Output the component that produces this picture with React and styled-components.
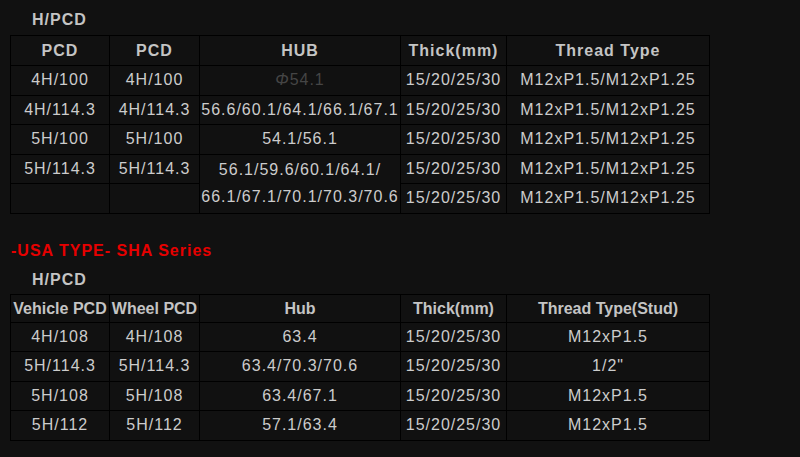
import React from 'react';
import styled, { createGlobalStyle } from 'styled-components';

const GlobalStyle = createGlobalStyle`
  body {
    margin: 0;
    background: #111111;
    font-family: "Liberation Sans", Arial, sans-serif;
  }
`;

const Page = styled.div`
  padding: 5px 0 0 10px;
  color: #cccccc;
  font-size: 16px;
  letter-spacing: 1px;
`;

const SubTitle = styled.div`
  font-weight: bold;
  color: #c4c4c4;
  line-height: ${p => p.$lh || 30}px;
  padding-left: 22px;
`;

const SeriesTitle = styled.div`
  font-weight: bold;
  color: #e60000;
  line-height: 28px;
  margin-top: 23px;
  padding-left: 1px;
`;

const Table = styled.table`
  border-collapse: collapse;
  table-layout: fixed;
  width: 699px;
  background: #111111;
`;

const Th = styled.th`
  border: 1px solid #000;
  padding: ${p => (p.$tight ? '0' : '1px 0')};
  line-height: 27px;
  font-weight: bold;
  color: #c4c4c4;
  text-align: center;
  white-space: nowrap;
  letter-spacing: ${p => (p.$tight ? '0' : '1px')};
`;

const Td = styled.td`
  border: 1px solid #000;
  padding: 1px 0;
  line-height: 26.5px;
  text-align: center;
  white-space: nowrap;
  vertical-align: middle;
  color: ${p => (p.$dim ? '#454545' : '#cccccc')};
`;

const Phi = styled.span`
  font-style: italic;
`;

const widths = [99, 90, 201, 106, 203];

const Cols = () => (
  <colgroup>
    {widths.map((w, i) => (
      <col key={i} style={{ width: w }} />
    ))}
  </colgroup>
);

const usaRows = [
  ['4H/108', '4H/108', '63.4', '15/20/25/30', 'M12xP1.5'],
  ['5H/114.3', '5H/114.3', '63.4/70.3/70.6', '15/20/25/30', '1/2"'],
  ['5H/108', '5H/108', '63.4/67.1', '15/20/25/30', 'M12xP1.5'],
  ['5H/112', '5H/112', '57.1/63.4', '15/20/25/30', 'M12xP1.5'],
];

const thread = 'M12xP1.5/M12xP1.25';
const thick = '15/20/25/30';

export default function App() {
  return (
    <Page>
      <GlobalStyle />
      <SubTitle>H/PCD</SubTitle>
      <Table>
        <Cols />
        <thead>
          <tr>
            <Th>PCD</Th>
            <Th>PCD</Th>
            <Th>HUB</Th>
            <Th>Thick(mm)</Th>
            <Th>Thread Type</Th>
          </tr>
        </thead>
        <tbody>
          <tr>
            <Td>4H/100</Td>
            <Td>4H/100</Td>
            <Td $dim><Phi>Φ</Phi>54.1</Td>
            <Td>{thick}</Td>
            <Td>{thread}</Td>
          </tr>
          <tr>
            <Td>4H/114.3</Td>
            <Td>4H/114.3</Td>
            <Td>56.6/60.1/64.1/66.1/67.1</Td>
            <Td>{thick}</Td>
            <Td>{thread}</Td>
          </tr>
          <tr>
            <Td>5H/100</Td>
            <Td>5H/100</Td>
            <Td>54.1/56.1</Td>
            <Td>{thick}</Td>
            <Td>{thread}</Td>
          </tr>
          <tr>
            <Td>5H/114.3</Td>
            <Td>5H/114.3</Td>
            <Td rowSpan={2}>
              56.1/59.6/60.1/64.1/
              <br />
              66.1/67.1/70.1/70.3/70.6
            </Td>
            <Td>{thick}</Td>
            <Td>{thread}</Td>
          </tr>
          <tr>
            <Td></Td>
            <Td></Td>
            <Td>{thick}</Td>
            <Td>{thread}</Td>
          </tr>
        </tbody>
      </Table>

      <SeriesTitle>-USA TYPE- SHA Series</SeriesTitle>
      <SubTitle $lh={29}>H/PCD</SubTitle>
      <Table>
        <Cols />
        <thead>
          <tr>
            <Th $tight>Vehicle PCD</Th>
            <Th $tight>Wheel PCD</Th>
            <Th $tight>Hub</Th>
            <Th $tight>Thick(mm)</Th>
            <Th $tight>Thread Type(Stud)</Th>
          </tr>
        </thead>
        <tbody>
          {usaRows.map((row, i) => (
            <tr key={i}>
              {row.map((cell, j) => (
                <Td key={j}>{cell}</Td>
              ))}
            </tr>
          ))}
        </tbody>
      </Table>
    </Page>
  );
}
